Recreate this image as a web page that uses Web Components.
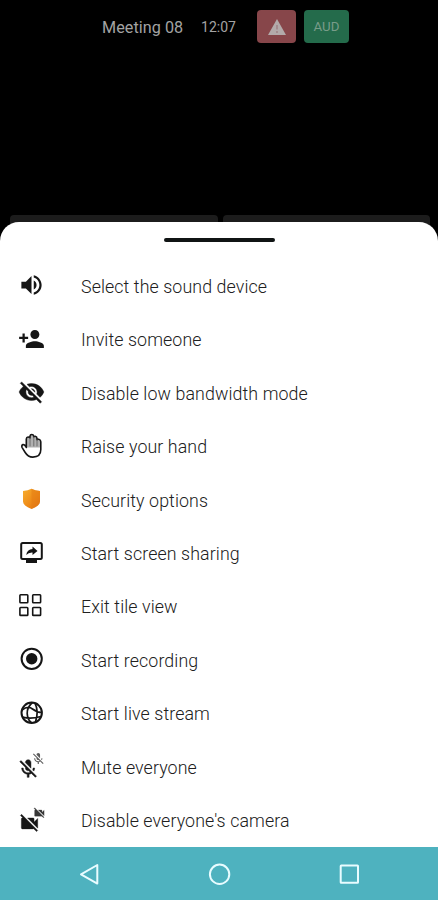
<!DOCTYPE html>
<html lang="en">
<head>
<meta charset="utf-8">
<title>Meeting options</title>
<style>
body{margin:0;background:#000;font-family:Roboto,sans-serif}
</style>
</head>
<body>
<meeting-screen></meeting-screen>
<script>
const define = (name, html) => customElements.define(name, class extends HTMLElement {
  constructor() {
    super();
    const t = document.createElement('template');
    t.innerHTML = html;
    this.attachShadow({mode: 'open'}).appendChild(t.content.cloneNode(true));
  }
});

define('meeting-header', `
<style>
:host{display:flex;height:53px;align-items:center;color:#a3a3a3;box-sizing:border-box;padding-left:102px}
.title{width:90px;font-size:16.2px;font-weight:400;white-space:nowrap;letter-spacing:.05px;padding-top:1px;box-sizing:border-box}
.time{width:53px;text-align:center;font-size:14px;font-weight:400;padding-top:1px}
.warn,.aud{height:33px;border-radius:4px;display:flex;align-items:center;justify-content:center}
.warn{width:39px;margin-left:12px;background:#87464a}
.aud{width:45px;margin-left:8px;background:#246b4b;color:#799c89;font-size:13.3px;font-weight:400}
</style>
<span class="title">Meeting 08</span><span class="time">12:07</span>
<span class="warn"><svg width="20" height="18" viewBox="0 0 20 18"><path d="M10 1 19 17H1Z" fill="#b3aaaa"/><path d="M10 7v4.5M10 13v2" stroke="#a08589" stroke-width="1.6"/></svg></span>
<span class="aud">AUD</span>`);

define('video-tiles', `
<style>
:host{display:flex;gap:5px;padding:0 8px 0 10px;height:30px}
i{flex:1;background:#1c1c1c;border-radius:4px}
</style><i></i><i></i>`);

define('sheet-item', `
<style>
:host{display:flex;height:53.5px;align-items:center;padding-left:18px}
.icon{width:27px;height:27px;margin-right:36px;color:#151515;display:flex;transform:translateY(-.5px)}
.label{font-size:17.8px;letter-spacing:.1px;font-weight:300;color:#202020;white-space:nowrap;padding-top:.8px}
</style>
<span class="icon"><slot name="icon"></slot></span><span class="label"><slot></slot></span>`);

define('bottom-sheet', `
<style>
:host{display:flex;flex-direction:column;background:#fff;border-radius:19px 19px 0 0;box-sizing:border-box;height:625px}
.grip{flex:none;width:111px;height:4px;border-radius:3px;background:#101414;margin:16.4px auto 16.8px 164px}
</style>
<div class="grip"></div><slot></slot>`);

define('system-nav', `
<style>
:host{display:grid;grid-template-columns:repeat(3,130px);height:53px;background:#4eb2bf;padding-left:25px;align-items:center;justify-items:center;box-sizing:border-box}
svg{fill:none;stroke:#e8fcff;stroke-width:2;stroke-linejoin:round}
</style>
<svg width="24" height="24"><path d="M3 12.3 19.3 3v18.6Z"/></svg>
<svg width="24" height="24"><circle cx="11.6" cy="12.3" r="9.7"/></svg>
<svg width="24" height="24"><rect x="2.7" y="3.5" width="17.3" height="17.3" rx=".5"/></svg>`);

define('meeting-screen', `
<style>
:host{display:flex;flex-direction:column;height:900px;width:438px;background:#000;overflow:hidden}
.gap{height:162px;flex:none}
video-tiles{flex:none}
bottom-sheet{flex:none;margin-top:-23px;position:relative}
svg{width:27px;height:27px;display:block;overflow:visible;fill:currentColor}
.line{fill:none;stroke:currentColor}
</style>
<meeting-header></meeting-header>
<div class="gap"></div>
<video-tiles></video-tiles>
<bottom-sheet>
<sheet-item><svg slot="icon" viewBox="0 0 24 24"><path d="M3 9v6h4l5 5V4L7 9H3zm13.5 3c0-1.77-1.02-3.29-2.5-4.03v8.05c1.48-.73 2.5-2.25 2.5-4.02zM14 3.23v2.06c2.89.86 5 3.54 5 6.71s-2.11 5.85-5 6.71v2.06c4.01-.91 7-4.49 7-8.77s-2.99-7.86-7-8.77z"/></svg>Select the sound device</sheet-item>
<sheet-item><svg slot="icon" viewBox="0 0 24 24"><path d="M15 12c2.21 0 4-1.79 4-4s-1.79-4-4-4-4 1.79-4 4 1.79 4 4 4zm-9-2V7H4v3H1v2h3v3h2v-3h3v-2H6zm9 4c-2.67 0-8 1.34-8 4v2h16v-2c0-2.66-5.33-4-8-4z"/></svg>Invite someone</sheet-item>
<sheet-item><svg slot="icon" viewBox="0 0 24 24"><path d="M12 7c2.76 0 5 2.24 5 5 0 .65-.13 1.26-.36 1.83l2.92 2.92c1.51-1.26 2.7-2.89 3.43-4.75-1.73-4.39-6-7.5-11-7.5-1.4 0-2.74.25-3.98.7l2.16 2.16C10.74 7.13 11.35 7 12 7zM2 4.27l2.28 2.28.46.46C3.08 8.3 1.78 10.02 1 12c1.73 4.39 6 7.5 11 7.5 1.55 0 3.03-.3 4.38-.84l.42.42L19.73 22 21 20.73 3.27 3 2 4.27zM7.53 9.8l1.55 1.55c-.05.21-.08.43-.08.65 0 1.66 1.34 3 3 3 .22 0 .44-.03.65-.08l1.55 1.55c-.67.33-1.41.53-2.2.53-2.76 0-5-2.24-5-5 0-.79.2-1.53.53-2.2zm4.31-.78l3.15 3.15.02-.16c0-1.66-1.34-3-3-3l-.17.01z" stroke="currentColor" stroke-width=".4"/></svg>Disable low bandwidth mode</sheet-item>
<sheet-item><svg slot="icon" viewBox="0 0 27 27"><path d="M9 15V5.8Q10 4 11.8 5V3.5Q13.5 1.3 15.5 3.5V4.5Q17.5 3 19 5V7Q21.5 6 22.5 8.5V15Z" fill="#b0b0b0"/><g class="line" stroke-width="1.6" stroke-linejoin="round" stroke-linecap="round"><path d="M8.3 15V6.5Q8.5 4.5 10 4.5T12 5.5V3.7Q12.2 2 13.8 2T15.8 3.8V4.5Q16.2 3.7 17.3 3.8 19 4 19 6V7.3Q19.5 6.5 20.8 6.8 22.8 7.3 22.8 9.3V17Q22.8 24.6 14.8 24.6 10 24.6 7.2 20L4 14.8Q3.3 12.7 5 12 6.8 11.8 8.3 15"/><path d="M12 5.5V13.5M15.8 4.5V13.5M19 7.3V13.5" stroke-width=".9" stroke="#666"/></g></svg>Raise your hand</sheet-item>
<sheet-item><svg slot="icon" viewBox="0 0 27 27"><defs><linearGradient id="shield" x1="0" y1="0" x2="1" y2="1"><stop stop-color="#f7ae2e"/><stop offset=".55" stop-color="#ee8b18"/><stop offset="1" stop-color="#dc6b10"/></linearGradient></defs><path d="M5 5.5Q10 5 13.5 3.2 17 5 22 5.5V16Q22 20 13.5 23.6 5 20 5 16Z" fill="url(#shield)"/><path d="M13.5 3.2Q17 5 22 5.5V16Q22 20 13.5 23.6Z" fill="#e37b14" opacity=".5"/></svg>Security options</sheet-item>
<sheet-item><svg slot="icon" viewBox="0 0 27 27"><rect class="line" x="3.2" y="3.5" width="20.6" height="15.9" rx="1.5" stroke-width="2"/><path d="M8 20h11v3.5H8ZM8.2 15.5Q9 10 14.5 9.6V7L19.5 11.4 14.5 15.5V13Q10.5 12.8 8.2 15.5Z"/></svg>Start screen sharing</sheet-item>
<sheet-item><svg slot="icon" viewBox="0 0 27 27"><g class="line" stroke-width="1.6"><rect x="1.9" y="2.3" width="7.9" height="7.9" rx=".7"/><rect x="14.7" y="2.3" width="7.9" height="7.9" rx=".7"/><rect x="1.9" y="15" width="7.9" height="7.9" rx=".7"/><rect x="14.7" y="15" width="7.9" height="7.9" rx=".7"/></g></svg>Exit tile view</sheet-item>
<sheet-item><svg slot="icon" viewBox="0 0 27 27"><circle class="line" cx="13.7" cy="13.3" r="10.1" stroke-width="2"/><circle cx="13.7" cy="13.3" r="5.7"/></svg>Start recording</sheet-item>
<sheet-item><svg slot="icon" viewBox="0 0 27 27"><g class="line" stroke-width="1.7"><circle cx="13.7" cy="13.3" r="10.2" stroke-width="2"/><path d="M14.5 3Q9 7.5 9.2 14T14 23.5M4 10.5Q10 6 14.5 9.5T24 13M4.5 17.5Q12 20 23 17M17 3.8Q21 11 17.5 22.5"/></g></svg>Start live stream</sheet-item>
<sheet-item><svg slot="icon" viewBox="0 0 27 27"><g transform="translate(-1 5.3) scale(.93)" stroke="currentColor" stroke-width=".5"><path id="mic" d="M19 11h-1.7c0 .74-.16 1.43-.43 2.05l1.23 1.23c.56-.98.9-2.09.9-3.28zm-4.02.17c0-.06.02-.11.02-.17V5c0-1.66-1.34-3-3-3S9 3.34 9 5v.18l5.98 5.99zM4.27 3L3 4.27l6.01 6.01V11c0 1.66 1.33 3 2.99 3 .22 0 .44-.03.65-.08l1.66 1.66c-.71.33-1.5.52-2.31.52-2.76 0-5.3-2.1-5.3-5.1H5c0 3.41 2.72 6.23 6 6.72V21h2v-3.28c.91-.13 1.77-.45 2.54-.9L19.73 21 21 19.73 4.27 3z"/></g><use href="#mic" transform="translate(13.2 -.8) scale(.59)" opacity=".7"/></svg>Mute everyone</sheet-item>
<sheet-item><svg slot="icon" viewBox="0 0 27 27"><g transform="translate(.6 6) scale(.91)"><path id="cam" d="M21 6.5l-4 4V7c0-.55-.45-1-1-1H9.82L21 17.18V6.5zM3.27 2L2 3.27 4.73 6H4c-.55 0-1 .45-1 1v10c0 .55.45 1 1 1h12c.21 0 .39-.08.54-.18L19.73 21 21 19.73 3.27 2z" stroke="currentColor" stroke-width=".4"/></g><use href="#cam" transform="translate(15 .2) scale(.53)" opacity=".85"/></svg>Disable everyone's camera</sheet-item>
</bottom-sheet>
<system-nav></system-nav>`);
</script>
</body>
</html>
